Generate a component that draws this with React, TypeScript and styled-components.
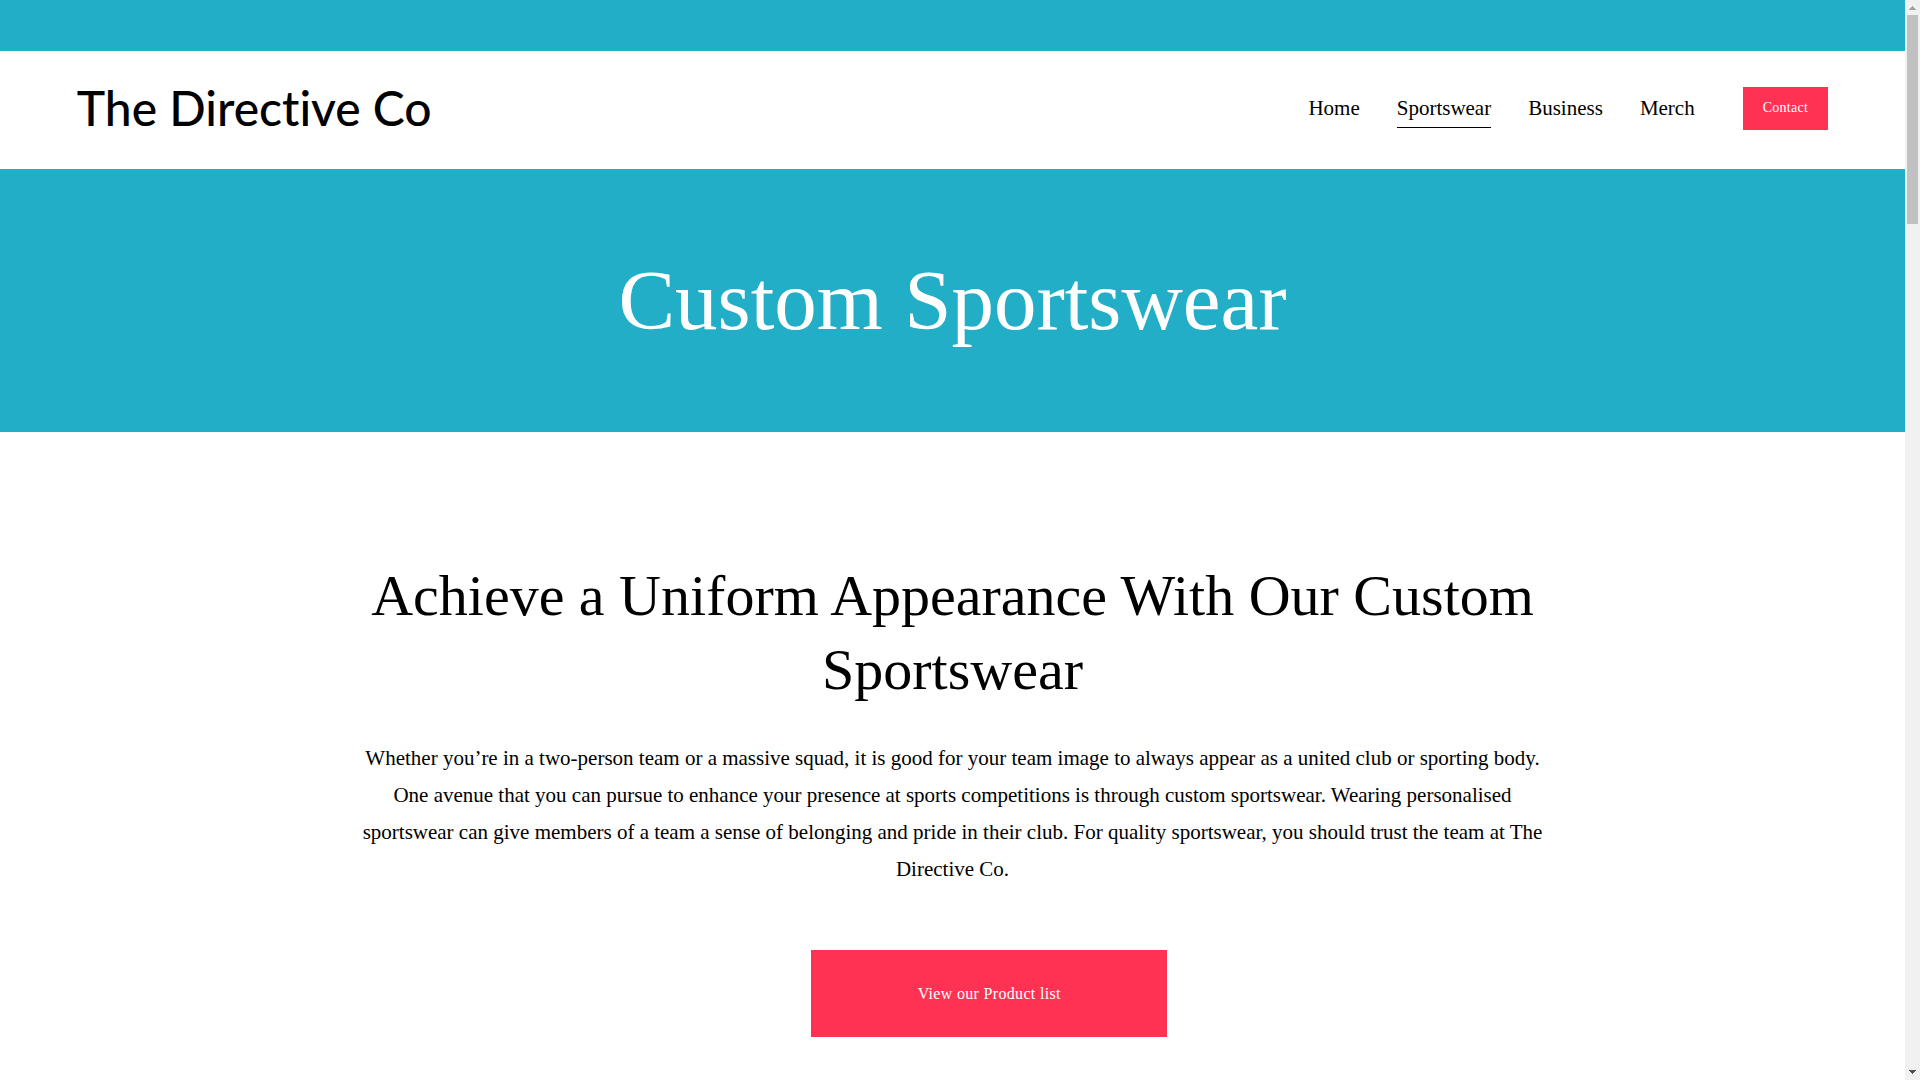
import React from "react";
import styled, { createGlobalStyle } from "styled-components";

const GlobalStyle = createGlobalStyle`
  *, *::before, *::after { box-sizing: border-box; }
  body {
    margin: 0;
    background: #ffffff;
    color: #000000;
    font-family: "Liberation Serif", "Times New Roman", serif;
  }
`;

const teal = "#23aec7";
const pink = "#ff3254";

const Page = styled.div`
  display: flex;
  min-height: 100vh;
`;

const Content = styled.div`
  flex: 1;
  min-width: 0;
`;

const AnnouncementBar = styled.div`
  height: 51px;
  background: ${teal};
`;

const Header = styled.header`
  display: flex;
  align-items: center;
  justify-content: space-between;
  height: 118px;
  padding: 0 4vw 4px;
`;

const Logo = styled.a`
  color: #000000;
  font-family: Lato, "Open Sans", sans-serif;
  font-size: 48px;
  font-weight: 500;
  font-variant-ligatures: none;
  line-height: 56px;
  text-decoration: none;
  white-space: nowrap;
`;

const HeaderActions = styled.div`
  display: flex;
  align-items: center;
  gap: 48px;
`;

const Nav = styled.nav`
  display: flex;
  gap: 37px;
`;

const NavLink = styled.a<{ $active?: boolean }>`
  border-bottom: 1px solid ${(p) => (p.$active ? "#000000" : "transparent")};
  color: #000000;
  font-size: 21px;
  line-height: 38px;
  text-decoration: none;
`;

const Button = styled.a<{ $large?: boolean }>`
  display: flex;
  align-items: center;
  justify-content: center;
  height: ${(p) => (p.$large ? "87px" : "43px")};
  padding: 0 20px;
  background: ${pink};
  color: #ffffff;
  font-size: ${(p) => (p.$large ? "16px" : "14px")};
  letter-spacing: 0.02em;
  text-decoration: none;
`;

const Hero = styled.section`
  padding: 76px 4vw 77px;
  background: ${teal};
  color: #ffffff;
  text-align: center;
`;

const HeroTitle = styled.h1`
  margin: 0;
  font-size: 85px;
  font-weight: 400;
  line-height: 110px;
`;

const Intro = styled.section`
  display: grid;
  grid-template-columns: repeat(24, minmax(0, 1fr));
  column-gap: 11px;
  padding: 127px 4vw 43px;
`;

const IntroText = styled.div`
  grid-column: 5 / span 16;
  text-align: center;
`;

const IntroTitle = styled.h2`
  margin: 0 0 33px;
  font-size: 58px;
  font-weight: 400;
  line-height: 74px;
`;

const Paragraph = styled.p`
  margin: 0 -12px;
  font-size: 21px;
  line-height: 37px;
`;

const IntroAction = styled.div`
  grid-column: 11 / span 5;
  margin-top: 62px;
`;

const ScrollTrack = styled.div`
  position: sticky;
  top: 0;
  display: flex;
  flex-direction: column;
  align-items: center;
  width: 15px;
  height: 100vh;
  background: #f1f1f1;
`;

const ScrollArrow = styled.svg`
  display: block;
  flex: none;
  width: 15px;
  height: 15px;
`;

const ScrollThumb = styled.div`
  width: 11px;
  height: 209px;
  margin-bottom: auto;
  background: #c1c1c1;
`;

const links = ["Home", "Sportswear", "Business", "Merch"];

export default function App() {
  return (
    <>
      <GlobalStyle />
      <Page>
        <Content>
          <AnnouncementBar />
          <Header>
            <Logo href="#">The Directive Co</Logo>
            <HeaderActions>
              <Nav>
                {links.map((label) => (
                  <NavLink key={label} href="#" $active={label === "Sportswear"}>
                    {label}
                  </NavLink>
                ))}
              </Nav>
              <Button href="#">Contact</Button>
            </HeaderActions>
          </Header>
          <main>
            <Hero>
              <HeroTitle>Custom Sportswear</HeroTitle>
            </Hero>
            <Intro>
              <IntroText>
                <IntroTitle>Achieve a Uniform Appearance With Our Custom Sportswear</IntroTitle>
                <Paragraph>
                  Whether you’re in a two-person team or a massive squad, it is good for your team
                  image to always appear as a united club or sporting body. One avenue that you can
                  pursue to enhance your presence at sports competitions is through custom
                  sportswear. Wearing personalised sportswear can give members of a team a sense of
                  belonging and pride in their club. For quality sportswear, you should trust the
                  team at The Directive Co.
                </Paragraph>
              </IntroText>
              <IntroAction>
                <Button href="#" $large>
                  View our Product list
                </Button>
              </IntroAction>
            </Intro>
          </main>
        </Content>
        <ScrollTrack aria-hidden="true">
          <ScrollArrow viewBox="0 0 15 15">
            <path d="M4 10h7v-1h-1v-1h-1v-1h-1v-1h-1v1h-1v1h-1v1h-1z" fill="#a3a3a3" />
          </ScrollArrow>
          <ScrollThumb />
          <ScrollArrow viewBox="0 0 15 15">
            <path d="M4 5h7v1h-1v1h-1v1h-1v1h-1v-1h-1v-1h-1v-1h-1z" fill="#505050" />
          </ScrollArrow>
        </ScrollTrack>
      </Page>
    </>
  );
}
